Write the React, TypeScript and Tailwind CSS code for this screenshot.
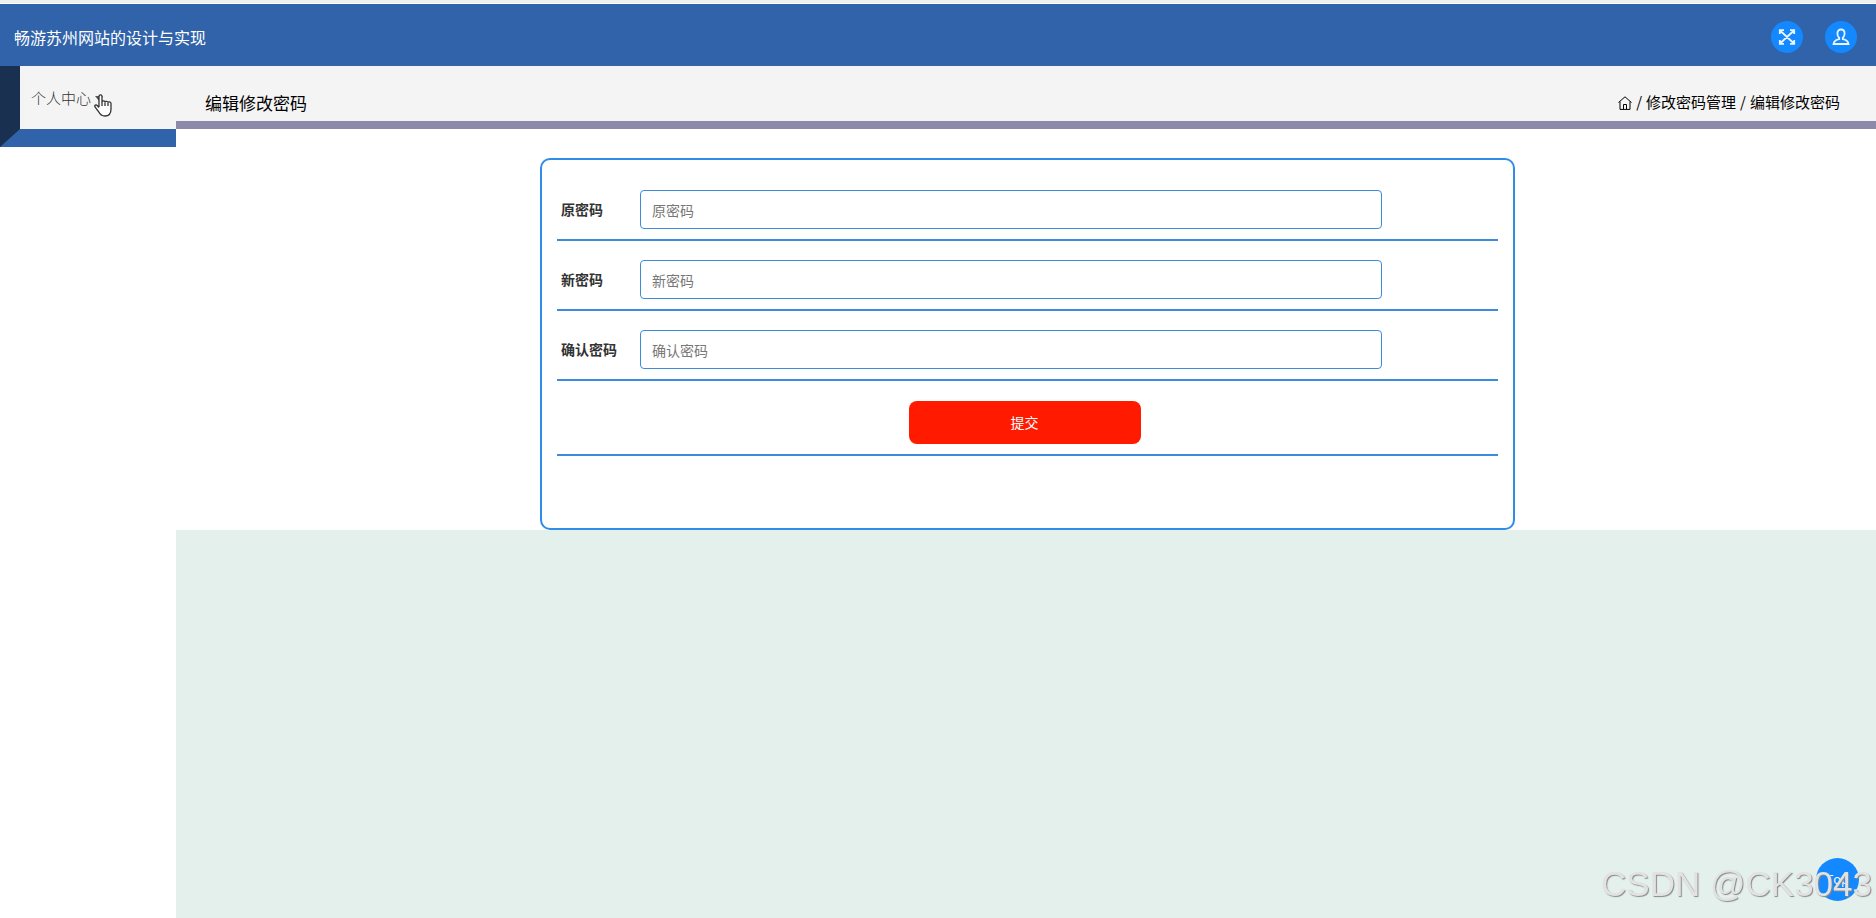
import { useState } from 'react';

const FIELDS = [
  { id: 'old-password', label: '原密码' },
  { id: 'new-password', label: '新密码' },
  { id: 'confirm-password', label: '确认密码' },
];

const FullScreenIcon: React.FC = () => (
  <svg viewBox="0 0 18 18" className="size-[18px]" fill="none" stroke="currentColor" strokeWidth="1.8">
    <path d="M2 2.500l14 13M16 2.500L2 15.500M1.800 6V2.200H6M12 2.200h4.200V6M16.200 12v3.800H12M6 15.800H1.800V12" />
  </svg>
);

const UserIcon: React.FC = () => (
  <svg viewBox="0 0 18 18" className="size-[18px]" fill="none" stroke="currentColor" strokeWidth="1.8">
    <path d="M9 1.500c2.200 0 3.600 1.600 3.600 4.100 0 1.900-.7 3.300-1.800 4.200v1.400c3 .5 5.300 1.800 5.700 4.800h-15c.4-3 2.700-4.300 5.700-4.800V9.800C6.100 8.900 5.400 7.500 5.400 5.600c0-2.500 1.400-4.100 3.600-4.100z" />
  </svg>
);

const HomeIcon: React.FC = () => (
  <svg viewBox="0 0 14 14" className="size-[14px]" fill="none" stroke="currentColor" strokeWidth="1">
    <path d="M.5 6.500L7 .8l6.500 5.700M2 5.500v7.900h10V5.500M5.500 13.400V8.500h3v4.900" />
  </svg>
);

const HandCursor: React.FC = () => (
  <svg viewBox="0 0 18 23" className="h-[23px] w-[18px]" fill="#fff" stroke="#333" strokeWidth="1.3">
    <path d="M5 13V2.500C5 .4 8 .4 8 2.500V8c0-1.600 3-1.600 3 .3 0-1.500 3-1.300 3 .5 0-1.400 3-1.200 3 .7V15c0 4-2 7-6 7-3.500 0-5-1.500-6.500-4.500L1 13c-.9-1.700 1-2.700 2.200-1.500L5 13.500M8 8v4M11 8.500V12M14 9v3" />
  </svg>
);

const App: React.FC = () => {
  const [form, setForm] = useState<Record<string, string>>({});
  return (
    <div className="flex min-h-screen flex-col border-t-[3px] border-[#efefef] bg-white font-['Noto_Sans_CJK_SC',sans-serif] text-black">
      {/* Header */}
      <header className="mt-px flex h-[62px] items-center justify-between bg-[#3063aa] pt-1 pr-[19px] pl-[14px]">
        <h1 className="text-[16px] text-white">畅游苏州网站的设计与实现</h1>
        <div className="flex gap-[22px]">
          <button aria-label="全屏" className="flex size-8 items-center justify-center rounded-full bg-[#1489ff] text-[#e8f4ff]">
            <FullScreenIcon />
          </button>
          <button aria-label="用户" className="flex size-8 items-center justify-center rounded-full bg-[#1489ff] text-[#e8f4ff]">
            <UserIcon />
          </button>
        </div>
      </header>
      <div className="flex grow">
        {/* Sidebar */}
        <aside className="w-[176px] shrink-0">
          <nav className="relative h-[81px] border-b-[18px] border-l-[20px] border-b-[#3063aa] border-l-[#1a3051] bg-[#f4f4f4] pt-5 pl-[11px]">
            <a href="#" className="flex items-center gap-1 text-[15px] leading-6 font-light text-[#333]">
              个人中心
              <svg viewBox="0 0 8 5" className="h-[5px] w-2" fill="#555">
                <path d="M0 0h8L4 5z" />
              </svg>
            </a>
            <span className="pointer-events-none absolute top-7 left-[74px]">
              <HandCursor />
            </span>
          </nav>
        </aside>
        <main className="flex grow flex-col">
          <div className="flex h-[63px] items-center justify-between border-b-8 border-[#8d89a8] bg-[#f4f4f4] pt-[18px] pr-9 pl-[29px]">
            <h2 className="text-[17px]">编辑修改密码</h2>
            <nav className="flex items-center gap-1 text-[15px]">
              <a href="#" aria-label="首页">
                <HomeIcon />
              </a>
              <span>/</span>
              <a href="#">修改密码管理</a>
              <span>/</span>
              <span>编辑修改密码</span>
            </nav>
          </div>
          {/* Password form */}
          <div className="flex justify-center pt-[29px] pl-[3px]">
            <form
              className="w-[975px] rounded-[10px] border-2 border-[#2f8de8] px-[15px] pt-[11px] pb-[72px] text-[14px]"
              onSubmit={(e) => e.preventDefault()}
            >
              {FIELDS.map((field) => (
                <div key={field.id} className="flex items-center border-b-2 border-[#3d8bdb] pt-[19px] pb-[10px]">
                  <label htmlFor={field.id} className="w-[83px] pl-1 font-bold text-[#333]">
                    {field.label}
                  </label>
                  <input
                    id={field.id}
                    type="password"
                    placeholder={field.label}
                    className="h-[39px] w-[742px] rounded border border-[#3d8bdb] px-[11px] outline-none placeholder:text-[#777]"
                    value={form[field.id] || ''}
                    onChange={(e) => setForm({ ...form, [field.id]: e.target.value })}
                  />
                </div>
              ))}
              <div className="flex justify-center border-b-2 border-[#3d8bdb] pt-5 pr-[6px] pb-[10px]">
                <button type="submit" className="h-[43px] w-[232px] rounded-lg bg-[#ff1a00] text-[14px] text-white">
                  提交
                </button>
              </div>
            </form>
          </div>
          <div className="grow bg-[#e4f0ec]" />
        </main>
      </div>
      <button className="fixed right-[17px] bottom-[17px] size-[43px] rounded-full bg-[#1489ff] font-['Open_Sans',sans-serif] text-[13px] text-white">
        Top
      </button>
      <span className="pointer-events-none fixed right-1 bottom-[14px] font-['Liberation_Sans',sans-serif] text-[35px] leading-10 text-[#e2e2e2] [text-shadow:1px_1px_1px_#888]">
        CSDN @CK3043
      </span>
    </div>
  );
};

export default App;
